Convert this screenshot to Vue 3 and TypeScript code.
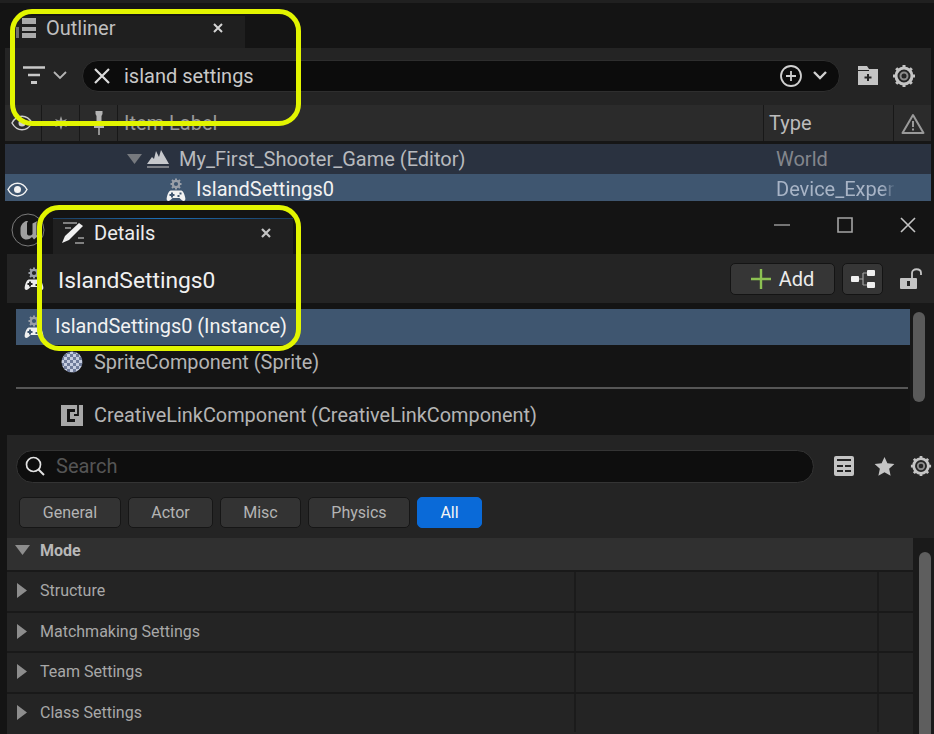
<script setup lang="ts">
const chips = [
  { label: 'General', width: 102 },
  { label: 'Actor', width: 85 },
  { label: 'Misc', width: 81 },
  { label: 'Physics', width: 102 },
  { label: 'All', width: 65, active: true },
]
const sections = ['Structure', 'Matchmaking Settings', 'Team Settings', 'Class Settings']
</script>

<template>
  <div class="screen">
    <svg class="defs" width="0" height="0">
      <defs>
        <symbol id="device" viewBox="0 0 20 24">
          <circle cx="10" cy="6" r="3.200" fill="none" stroke="#9a9fa8" stroke-width="2.200" />
          <path d="M10 .5v2M10 9.500v2M4.500 6h2M13.500 6h2M6 2l1.500 1.500M12.500 8.500L14 10M14 2l-1.500 1.500M7.500 8.500L6 10" stroke="#9a9fa8" stroke-width="2" />
          <path
            fill="currentColor"
            fill-rule="evenodd"
            d="M5.500 12.500h9c2.500 0 3.700 2.500 4.800 7.500.6 3.200-2.300 3.800-4.300 1.500L13.500 20h-7L5 21.500c-2 2.300-4.900 1.700-4.300-1.500 1.100-5 2.300-7.500 4.800-7.500zM5 14.500V16H3.500v2H5v1.500h2V18h1.500v-2H7v-1.500zM13.500 14.500v2h2v-2zM11.500 17v2h2v-2z"
          />
        </symbol>
        <symbol id="gear" viewBox="0 0 24 24">
          <circle cx="12" cy="12" r="8" fill="none" stroke="#c4c4c4" stroke-width="3" />
          <circle cx="12" cy="12" r="3.500" fill="none" stroke="#8a8a8a" stroke-width="2" />
          <path d="M12 1v4M12 19v4M1 12h4M19 12h4M4.200 4.200l2.800 2.800M17 17l2.800 2.800M19.800 4.200L17 7M7 17l-2.800 2.800" stroke="#c4c4c4" stroke-width="3" />
        </symbol>
        <pattern id="sprite-check" width="6" height="6" patternUnits="userSpaceOnUse">
          <rect width="6" height="6" fill="#c6cde0" />
          <rect width="3" height="3" fill="#6f7b9a" />
          <rect x="3" y="3" width="3" height="3" fill="#6f7b9a" />
        </pattern>
      </defs>
    </svg>

    <!-- outliner -->
    <section class="outliner">
      <div class="tabbar">
        <div class="tab outliner-tab">
          <svg class="tab-icon" width="21" height="20" viewBox="0 0 21 20">
            <path d="M7 0h14v6H7zM7 9h14v4H7zM7 15h14v5H7z" fill="#aaa" />
            <path d="M1 9h3v11H1z" fill="#6e6e6e" />
          </svg>
          <span class="tab-title">Outliner</span>
          <svg class="tab-close" width="12" height="12" viewBox="0 0 12 12">
            <path d="M2 2l8 8M10 2l-8 8" stroke="#d4d4d4" stroke-width="2" />
          </svg>
        </div>
      </div>
      <div class="outliner-tools">
        <svg class="filter-icon" width="22" height="20" viewBox="0 0 22 20">
          <path d="M0 1.500h22M5 9h12" stroke="#c8c8c8" stroke-width="2.600" />
          <path d="M8 16.500h6" stroke="#c8c8c8" stroke-width="3" />
        </svg>
        <svg class="chevron" width="14" height="9" viewBox="0 0 14 9">
          <path d="M1 1l6 6 6-6" fill="none" stroke="#b5b5b5" stroke-width="1.800" />
        </svg>
        <div class="outliner-search">
          <svg width="16" height="16" viewBox="0 0 16 16">
            <path d="M1 1l14 14M15 1L1 15" stroke="#dcdcdc" stroke-width="2.200" />
          </svg>
          <span class="search-value">island settings</span>
          <svg class="search-plus" width="24" height="24" viewBox="0 0 24 24">
            <circle cx="12" cy="12" r="10" fill="none" stroke="#d0d0d0" stroke-width="1.800" />
            <path d="M12 7v10M7 12h10" stroke="#d0d0d0" stroke-width="1.800" />
          </svg>
          <svg width="14" height="9" viewBox="0 0 14 9">
            <path d="M1 1l6 6 6-6" fill="none" stroke="#d0d0d0" stroke-width="2.400" />
          </svg>
        </div>
        <svg class="folder-icon" width="22" height="21" viewBox="0 0 22 21">
          <path d="M1 1h9l2 3h9v16H1z" fill="#c4c4c4" />
          <path d="M1 5.500h11" stroke="#242424" stroke-width="1" />
          <path d="M11 9v7M7.500 12.500h7" stroke="#242424" stroke-width="2" />
        </svg>
        <svg class="gear-icon" width="24" height="24"><use href="#gear" /></svg>
      </div>
      <div class="column-head">
        <div class="col col-eye">
          <svg class="head-eye" width="22" height="16" viewBox="0 0 22 16">
            <path d="M1 8c5-9 15-9 20 0-5 9-15 9-20 0z" fill="none" stroke="#cfcfcf" stroke-width="1.500" />
            <circle cx="11" cy="8" r="3.500" fill="#cfcfcf" />
          </svg>
        </div>
        <div class="col col-star">
          <svg width="14" height="14" viewBox="0 0 14 14">
            <path d="M7 0l1.500 4.500L13 3 10 7l3 4-4.500-1.500L7 14l-1.500-4.500L1 11l3-4-3-4 4.500 1.500z" fill="#a0a0a0" />
          </svg>
        </div>
        <div class="col col-pin">
          <svg width="10" height="24" viewBox="0 0 10 24">
            <path d="M1.500 0h7v3L7.500 5v5L10 13v4H0v-4l2.500-3V5L1.500 3z" fill="#b4b4b4" />
            <path d="M5 17v7" stroke="#b4b4b4" stroke-width="1.500" />
          </svg>
        </div>
        <div class="col col-label">Item Label <i class="sort-dot" /></div>
        <div class="col col-type">Type</div>
        <div class="col col-warn">
          <svg width="24" height="21" viewBox="0 0 24 21">
            <path d="M12 2l10.500 18h-21z" fill="none" stroke="#9a9a9a" stroke-width="2" stroke-linejoin="round" />
            <path d="M12 8v6M12 15.500v2" stroke="#9a9a9a" stroke-width="2" />
          </svg>
        </div>
      </div>
      <div class="tree-row world-row">
        <div class="tree-name world-name">
          <svg width="15" height="10" viewBox="0 0 15 10"><path d="M0 0h15L7.500 10z" fill="#76797e" /></svg>
          <svg class="world-icon" width="24" height="20" viewBox="0 0 24 20">
            <path d="M1 15l5-7 2 2 2-8 3 6 2-7 4 7 4 7z" fill="#c6c8cc" />
            <path d="M1 18h22" stroke="#8a8c90" stroke-width="1.700" />
          </svg>
          <span>My_First_Shooter_Game (Editor)</span>
        </div>
        <span class="tree-type">World</span>
      </div>
      <div class="tree-row device-row">
        <svg class="row-eye" width="21" height="15" viewBox="0 0 21 15">
          <path d="M1 7.500c4.500-8.500 14.500-8.500 19 0-4.500 8.500-14.500 8.500-19 0z" fill="none" stroke="#f2f2f2" stroke-width="1.500" />
          <circle cx="10.500" cy="7.500" r="3.500" fill="#f2f2f2" />
        </svg>
        <div class="tree-name device-name">
          <svg class="device-icon" width="20" height="24"><use href="#device" /></svg>
          <span>IslandSettings0</span>
        </div>
        <span class="tree-type device-type">Device_Experi</span>
      </div>
    </section>

    <!-- details window -->
    <section class="details">
      <div class="titlebar">
        <svg class="ue-logo" width="34" height="34" viewBox="0 0 34 34">
          <circle cx="17" cy="17" r="16" fill="#151515" stroke="#7a7a7a" stroke-width="1" />
          <path d="M15 8C11 10 9.500 13 9.500 16v4c0 4 2.500 6.500 6 6.500 2.500 0 4.500-1.500 5.500-2.500l2 2.500 4-3.500-1.500-1V10l1-2-5 2.500V21c-1.500 2-4.500 2-5.500 0V10l1-2z" fill="#a0a0a0" />
        </svg>
        <div class="tab details-tab">
          <svg class="tab-icon" width="24" height="24" viewBox="0 0 24 24">
            <path d="M2 2h14M4 7h6M14 22h9M17 17h6" stroke="#a0a0a0" stroke-width="1.300" />
            <path d="M18 2l4 3L8 19l-7 3 3-7z" fill="#f0f0f0" />
          </svg>
          <span class="tab-title details-title">Details</span>
          <svg class="tab-close" width="12" height="12" viewBox="0 0 12 12">
            <path d="M2 2l8 8M10 2l-8 8" stroke="#c4c4c4" stroke-width="2.200" />
          </svg>
        </div>
        <div class="window-buttons">
          <svg width="16" height="2" viewBox="0 0 16 2"><path d="M0 1h16" stroke="#8c8c8c" stroke-width="1.600" /></svg>
          <svg width="16" height="16" viewBox="0 0 16 16"><path d="M1 1h14v14H1z" fill="none" stroke="#a4a4a4" stroke-width="1.600" /></svg>
          <svg width="16" height="16" viewBox="0 0 16 16"><path d="M1 1l14 14M15 1L1 15" stroke="#c4c4c4" stroke-width="1.600" /></svg>
        </div>
      </div>
      <div class="actor-bar">
        <svg class="actor-icon" width="20" height="24"><use href="#device" /></svg>
        <span class="actor-name">IslandSettings0</span>
        <button class="add-button">
          <svg width="20" height="20" viewBox="0 0 20 20"><path d="M10 0v20M0 10h20" stroke="#8cc152" stroke-width="2.400" /></svg>
          <span>Add</span>
        </button>
        <button class="tree-button">
          <svg width="24" height="18" viewBox="0 0 24 18">
            <path d="M7 9h5M12 3v12M12 3h4M12 15h4" fill="none" stroke="#a0a0a0" stroke-width="1.200" />
            <rect x="0" y="6" width="8" height="6" rx="1" fill="#f0f0f0" />
            <rect x="16" y="0" width="8" height="6" rx="1" fill="#f0f0f0" />
            <rect x="16" y="12" width="8" height="6" rx="1" fill="#f0f0f0" />
          </svg>
        </button>
        <svg class="lock-icon" width="22" height="22" viewBox="0 0 22 22">
          <path d="M12 10V5c0-5 9-5 9 0v2" fill="none" stroke="#c4c4c4" stroke-width="1.800" />
          <rect x="0" y="10" width="17" height="11" rx="1" fill="#c4c4c4" />
          <rect x="7" y="13" width="3" height="5" fill="#242424" />
        </svg>
      </div>
      <div class="component-area">
        <div class="component-list">
          <div class="comp-row comp-selected">
            <svg class="comp-device" width="20" height="24"><use href="#device" /></svg>
            <span class="selected-label">IslandSettings0 (Instance)</span>
          </div>
          <div class="comp-row sprite-row">
            <svg class="comp-icon" width="22" height="22" viewBox="0 0 22 22">
              <circle cx="11" cy="11" r="10.500" fill="url(#sprite-check)" />
            </svg>
            <span>SpriteComponent (Sprite)</span>
          </div>
          <div class="comp-divider" />
          <div class="comp-row link-row">
            <svg class="comp-icon" width="22" height="21" viewBox="0 0 22 21">
              <rect width="22" height="21" fill="#a8a8a8" />
              <path d="M14 5.500H7.500v10H14" fill="none" stroke="#141414" stroke-width="3" />
              <path d="M17 0v10h-4" fill="none" stroke="#141414" stroke-width="1.800" />
            </svg>
            <span>CreativeLinkComponent (CreativeLinkComponent)</span>
          </div>
        </div>
        <div class="comp-scroll"><div class="comp-thumb" /></div>
      </div>
      <div class="property-search">
        <div class="search-box">
          <svg width="20" height="20" viewBox="0 0 20 20">
            <circle cx="8.500" cy="8.500" r="7" fill="none" stroke="#e2e2e2" stroke-width="1.700" />
            <path d="M13.500 13.500l5.500 5.500" stroke="#e2e2e2" stroke-width="1.900" />
          </svg>
          <span class="placeholder">Search</span>
        </div>
        <svg class="table-icon" width="22" height="22" viewBox="0 0 22 22">
          <rect x="1" y="1" width="20" height="20" rx="2" fill="#c4c4c4" />
          <path d="M4 5h14M4 11h6M12 11h6M4 16h6M12 16h6" stroke="#242424" stroke-width="2.200" />
        </svg>
        <svg class="star-icon" width="21" height="21" viewBox="0 0 24 24">
          <path d="M12 1l3.300 7.400 8 .8-6 5.400 1.700 7.900L12 18.500l-7 4 1.700-7.900-6-5.400 8-.8z" fill="#c4c4c4" />
        </svg>
        <svg class="gear-small" width="22" height="22"><use href="#gear" /></svg>
      </div>
      <div class="chips">
        <button
          v-for="chip in chips"
          :key="chip.label"
          class="chip"
          :class="{ 'chip-active': chip.active }"
          :style="{ width: chip.width + 'px' }"
        >
          {{ chip.label }}
        </button>
      </div>
      <div class="property-area">
        <div class="property-list">
          <div class="mode-head">
            <svg width="15" height="10" viewBox="0 0 15 10"><path d="M0 0h15L7.500 10z" fill="#8d8d8d" /></svg>
            <span>Mode</span>
          </div>
          <div v-for="name in sections" :key="name" class="prop-row">
            <div class="prop-name">
              <svg width="10" height="15" viewBox="0 0 10 15"><path d="M0 0l10 7.500L0 15z" fill="#8d8d8d" /></svg>
              <span>{{ name }}</span>
            </div>
            <div class="prop-value" />
            <div class="prop-end" />
          </div>
        </div>
        <div class="prop-scroll"><div class="prop-thumb" /></div>
      </div>
    </section>

    <!-- highlights drawn over the capture -->
    <div class="mark mark-outliner" />
    <div class="mark mark-details" />
  </div>
</template>

<style>
html,
body {
  margin: 0;
  background: #141414;
}
</style>

<style scoped>
.screen {
  position: relative;
  width: 934px;
  height: 734px;
  overflow: hidden;
  background: #141414;
  font-family: Roboto, "Liberation Sans", sans-serif;
  color: #c0c0c0;
}
svg {
  display: block;
  flex: none;
}
.defs {
  position: absolute;
}
button {
  font-family: inherit;
}

/* outliner */
.outliner {
  height: 207px;
  box-sizing: border-box;
  padding: 0 3px 0 5px;
  border-top: 3px solid #202020;
}
.tabbar {
  height: 45px;
  display: flex;
  align-items: flex-end;
  padding-left: 10px;
}
.tab {
  display: flex;
  align-items: center;
  position: relative;
  background: #1f1f1f;
}
.outliner-tab {
  width: 230px;
  height: 32px;
  box-sizing: border-box;
  padding-bottom: 8px;
}
.tab-title {
  margin-left: 10px;
  font-size: 20px;
  color: #c0c0c0;
}
.tab-close {
  margin-left: auto;
}
.outliner-tab .tab-close {
  margin-right: 21px;
}
.outliner-tools {
  height: 57px;
  display: flex;
  align-items: center;
  background: #242424;
  padding-left: 18px;
  padding-bottom: 2px;
  box-sizing: border-box;
}
.filter-icon {
  margin-right: 8px;
}
.outliner-search {
  width: 758px;
  height: 32px;
  margin-left: 15px;
  box-sizing: border-box;
  padding: 0 12px 0 11px;
  display: flex;
  align-items: center;
  background: #0c0c0c;
  border: 1px solid #2e2e2e;
  border-radius: 16px;
}
.search-value {
  margin-left: 14px;
  font-size: 20px;
  color: #c8c8c8;
}
.search-plus {
  margin-left: auto;
  margin-right: 10px;
}
.folder-icon {
  margin-left: 17px;
}
.gear-icon {
  margin-left: 13px;
}
.column-head {
  height: 36px;
  display: flex;
  background: #2b2b2b;
  border-bottom: 3px solid #161616;
}
.col {
  display: flex;
  align-items: center;
  justify-content: center;
  box-sizing: border-box;
  border-right: 1px solid #181818;
  font-size: 20px;
}
.col-eye {
  width: 37px;
}
.head-eye {
  margin-right: 3px;
}
.col-star {
  width: 38px;
}
.col-pin {
  width: 38px;
}
.col-label {
  width: 646px;
  justify-content: flex-start;
  padding-left: 6px;
  gap: 10px;
  color: #9a9a9a;
}
.sort-dot {
  width: 3px;
  height: 3px;
  background: #9a9a9a;
}
.col-type {
  width: 130px;
  justify-content: flex-start;
  padding-left: 5px;
  color: #bcbcbc;
}
.col-warn {
  width: 37px;
  border-right: none;
}
.tree-row {
  display: flex;
  align-items: center;
  font-size: 20px;
}
.world-row {
  height: 30px;
  background: #2a3240;
}
.device-row {
  height: 27px;
  box-sizing: border-box;
  padding-top: 3px;
  background: #3f5670;
  position: relative;
  color: #f2f2f2;
}
.row-eye {
  position: absolute;
  left: 2px;
  top: 8px;
}
.tree-name {
  display: flex;
  align-items: center;
  width: 771px;
}
.world-name {
  padding-left: 122px;
  box-sizing: border-box;
  gap: 4px;
  color: #b8babe;
}
.world-icon {
  margin-right: 5px;
}
.device-name {
  padding-left: 161px;
  box-sizing: border-box;
  gap: 10px;
}
.device-icon {
  color: #f2f2f2;
  margin-top: 1px;
}
.tree-type {
  color: #83868c;
}
.device-type {
  width: 120px;
  overflow: hidden;
  white-space: nowrap;
  color: #a8b4c6;
  mask-image: linear-gradient(to right, #000 88%, transparent);
}

/* details */
.details {
  height: 527px;
  padding-left: 7px;
  box-sizing: border-box;
}
.titlebar {
  height: 47px;
  display: flex;
  align-items: flex-start;
  background: #141414;
}
.ue-logo {
  margin: 6px 0 0 4px;
}
.details-tab {
  width: 240px;
  height: 36px;
  margin: 11px 0 0 8px;
  box-sizing: border-box;
  padding-bottom: 6px;
  background: #202020;
}
.details-tab::before {
  content: "";
  position: absolute;
  left: 0;
  right: 0;
  top: 0;
  height: 1px;
  background: linear-gradient(to right, #1c3c5c, #1c6fb8 45%, #1c3c5c);
}
.details-tab .tab-icon {
  margin-left: 8px;
}
.details-title {
  margin-left: 9px;
  color: #ececec;
}
.details-tab .tab-close {
  margin-right: 21px;
}
.window-buttons {
  margin-left: auto;
  margin-top: 10px;
  display: flex;
  align-items: center;
  gap: 47px;
  padding-right: 18px;
}
.actor-bar {
  height: 49px;
  display: flex;
  align-items: center;
  background: #242424;
  padding-left: 17px;
}
.actor-icon {
  color: #ececec;
}
.actor-name {
  margin-left: 14px;
  margin-top: 3px;
  font-size: 22.800px;
  color: #f0f0f0;
}
.add-button {
  margin-left: auto;
  width: 105px;
  height: 32px;
  display: flex;
  align-items: center;
  justify-content: center;
  gap: 8px;
  padding: 0;
  background: #363636;
  border: 1px solid #141414;
  border-radius: 5px;
  color: #ececec;
  font-size: 20px;
}
.tree-button {
  width: 41px;
  height: 32px;
  margin-left: 7px;
  display: flex;
  align-items: center;
  justify-content: center;
  padding: 0;
  background: #363636;
  border: 1px solid #141414;
  border-radius: 5px;
}
.lock-icon {
  margin: 0 12px 0 17px;
}
.component-area {
  height: 132px;
  display: flex;
  background: #181818;
}
.component-list {
  width: 903px;
  box-sizing: border-box;
  padding: 6px 0 0 9px;
  background: #141414;
  font-size: 19.900px;
}
.comp-row {
  display: flex;
  align-items: center;
  color: #b4b4b4;
}
.comp-selected {
  height: 36px;
  box-sizing: border-box;
  padding-bottom: 2px;
  position: relative;
  background: #3f5670;
  color: #f2f2f2;
}
.comp-device {
  position: absolute;
  left: 8px;
  top: 6px;
  color: #f0f0f0;
}
.selected-label {
  margin-left: 39px;
}
.sprite-row {
  height: 34px;
  padding-left: 45px;
  gap: 11px;
}
.comp-divider {
  height: 2px;
  margin: 8px 2px 0 0;
  background: #565656;
}
.link-row {
  height: 36px;
  margin-top: 8px;
  padding-left: 45px;
  gap: 11px;
}
.comp-scroll {
  flex: 1;
  padding: 9px 9px 0 3px;
}
.comp-thumb {
  height: 90px;
  border-radius: 6px;
  background: #5a5a5a;
}
.property-search {
  height: 62px;
  display: flex;
  align-items: center;
  background: #242424;
  padding-left: 9px;
}
.search-box {
  width: 798px;
  height: 33px;
  box-sizing: border-box;
  padding-left: 8px;
  display: flex;
  align-items: center;
  gap: 11px;
  background: #0e0e0e;
  border: 1px solid #343434;
  border-radius: 17px;
}
.placeholder {
  font-size: 20px;
  color: #555;
}
.table-icon {
  margin-left: 19px;
}
.star-icon {
  margin-left: 19px;
}
.gear-small {
  margin-left: 15px;
}
.chips {
  height: 41px;
  display: flex;
  align-items: flex-start;
  gap: 7px;
  background: #242424;
  padding-left: 12px;
}
.chip {
  height: 31px;
  padding: 0;
  background: #333;
  border: 1px solid #161616;
  border-radius: 5px;
  color: #b4b4b4;
  font-size: 16px;
}
.chip-active {
  background: #0a6ad8;
  border-color: #0a6ad8;
  color: #f4f4f4;
}
.property-area {
  display: flex;
  height: 196px;
}
.property-list {
  width: 906px;
  background: #242424;
}
.mode-head {
  height: 32px;
  display: flex;
  align-items: center;
  box-sizing: border-box;
  padding: 0 0 8px 8px;
  gap: 10px;
  background: #303030;
  font-size: 16px;
  font-weight: 700;
  color: #b8b8b8;
}
.prop-row {
  height: 40.500px;
  display: flex;
  box-sizing: border-box;
  border-top: 2px solid #191919;
}
.prop-name {
  width: 569px;
  display: flex;
  align-items: center;
  gap: 13px;
  padding: 0 0 1px 10px;
  box-sizing: border-box;
  border-right: 2px solid #1b1b1b;
  font-size: 16px;
  color: #a8a8a8;
}
.prop-value {
  width: 303px;
  border-right: 2px solid #1b1b1b;
  box-sizing: border-box;
}
.prop-end {
  flex: 1;
}
.prop-scroll {
  flex: 1;
  background: #1a1a1a;
  padding: 14px 3px 0 6px;
}
.prop-thumb {
  height: 190px;
  border-radius: 6px;
  background: #5e5e5e;
}

/* yellow highlights */
.mark {
  position: absolute;
  box-sizing: border-box;
  border: 5px solid #e2f500;
  border-radius: 22px;
}
.mark-outliner {
  left: 10px;
  top: 9px;
  width: 291px;
  height: 117px;
}
.mark-details {
  left: 37px;
  top: 205px;
  width: 264px;
  height: 146px;
}
</style>
